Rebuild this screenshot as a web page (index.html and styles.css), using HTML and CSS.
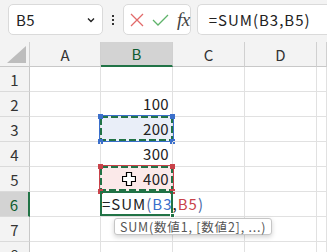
FILE: index.html
```html
<!DOCTYPE html>
<html lang="ja">
<head>
<meta charset="utf-8">
<link rel="stylesheet" href="styles.css">
</head>
<body>
<div class="toolbar">
  <div class="namebox">
    <span class="nb-text">B5</span>
    <svg class="chev" width="8" height="6" viewBox="0 0 8 6"><path d="M1 1.5 L4 4.5 L7 1.5" fill="none" stroke="#222" stroke-width="1.4"/></svg>
  </div>
  <div class="dots"><i></i><i></i><i></i></div>
  <div class="btns">
    <svg class="ic-x" width="14" height="14" viewBox="0 0 14 14"><path d="M1 1 L13 13 M13 1 L1 13" stroke="#e26a6a" stroke-width="1.3" fill="none"/></svg>
    <svg class="ic-ok" width="17" height="12" viewBox="0 0 17 12"><path d="M1 6 L6 11 L16 1" stroke="#5fb36a" stroke-width="1.3" fill="none"/></svg>
    <span class="fx">fx</span>
  </div>
  <div class="formula">=SUM(B3,B5)</div>
</div>

<div class="grid">
  <div class="h corner"><svg width="19" height="17" viewBox="0 0 19 17"><path d="M19 0 L19 17 L0 17 Z" fill="#bdbdbd"/></svg></div>
  <div class="h col">A</div>
  <div class="h col sel">B</div>
  <div class="h col">C</div>
  <div class="h col">D</div>
  <div class="h col"></div>

  <div class="h row">1</div><div class="c"></div><div class="c"></div><div class="c"></div><div class="c"></div><div class="c"></div>
  <div class="h row">2</div><div class="c"></div><div class="c num">100</div><div class="c"></div><div class="c"></div><div class="c"></div>
  <div class="h row">3</div><div class="c"></div>
  <div class="c num ref-blue">200
    <svg class="ants" width="81" height="34" viewBox="0 0 81 34">
      <rect x="2.5" y="2.5" width="74" height="26" fill="none" stroke="#3b6fcb" stroke-width="1"/>
      <rect x="4" y="4" width="71" height="23" fill="none" stroke="#217346" stroke-width="2" stroke-dasharray="7 3"/>
      <rect x="1" y="1" width="5" height="5" fill="#3b6fcb"/>
      <rect x="73" y="1" width="5" height="5" fill="#3b6fcb"/>
      <rect x="1" y="26" width="5" height="5" fill="#3b6fcb"/>
      <rect x="73" y="26" width="5" height="5" fill="#3b6fcb"/>
    </svg>
  </div>
  <div class="c"></div><div class="c"></div><div class="c"></div>
  <div class="h row">4</div><div class="c"></div><div class="c num">300</div><div class="c"></div><div class="c"></div><div class="c"></div>
  <div class="h row">5</div><div class="c"></div>
  <div class="c num ref-red">400
    <svg class="ants" width="81" height="34" viewBox="0 0 81 34">
      <rect x="2.5" y="2.5" width="74" height="26" fill="none" stroke="#c9424a" stroke-width="1"/>
      <rect x="4" y="4" width="71" height="23" fill="none" stroke="#217346" stroke-width="2" stroke-dasharray="7 3"/>
      <rect x="1" y="1" width="5" height="5" fill="#c9424a"/>
      <rect x="73" y="1" width="5" height="5" fill="#c9424a"/>
      <rect x="1" y="26" width="5" height="5" fill="#c9424a"/>
      <rect x="73" y="26" width="5" height="5" fill="#c9424a"/>
    </svg>
    <svg class="cursor" width="14" height="14" viewBox="0 0 14 14"><path d="M4.5 0.5 H9.5 V4.5 H13.5 V9.5 H9.5 V13.5 H4.5 V9.5 H0.5 V4.5 H4.5 Z" fill="#fff" stroke="#000" stroke-width="1.2"/></svg>
  </div>
  <div class="c"></div><div class="c"></div><div class="c"></div>
  <div class="h row sel">6</div><div class="c"></div>
  <div class="c edit">
    <div class="active"></div>
    <div class="fill"></div>
    <span class="ftext">=SUM<span class="par">(</span><span class="rb">B3</span>,<span class="rr">B5</span><span class="par">)</span></span>
    <div class="tip">SUM(数値1, [数値2], ...)</div>
  </div>
  <div class="c"></div><div class="c"></div><div class="c"></div>
  <div class="h row">7</div><div class="c"></div><div class="c"></div><div class="c"></div><div class="c"></div><div class="c"></div>
  <div class="h row">8</div><div class="c"></div><div class="c"></div><div class="c"></div><div class="c"></div><div class="c"></div>
</div>
</body>
</html>
```
FILE: styles.css
```css
* { box-sizing: border-box; }
html, body { margin: 0; padding: 0; }
body {
  width: 327px;
  height: 252px;
  overflow: hidden;
  background: #fff;
  font-family: "Noto Sans CJK JP", "Noto Sans", sans-serif;
  color: #222;
}

/* ---------- toolbar ---------- */
.toolbar {
  height: 42px;
  background: #f3f3f3;
  display: flex;
  align-items: flex-start;
  padding: 4px 0 0 8px;
  white-space: nowrap;
}
.namebox, .btns, .formula {
  height: 31px;
  background: #fff;
  border: 1px solid #dadada;
  border-radius: 5px;
  display: flex;
  align-items: center;
}
.namebox {
  width: 101px;
  padding: 0 7px 0 7px;
  justify-content: space-between;
}
.nb-text { font-size: 15px; letter-spacing: 0.5px; }
.dots {
  width: 22px;
  height: 31px;
  display: flex;
  flex-direction: column;
  align-items: center;
  justify-content: center;
  gap: 2px;
}
.dots i {
  display: block;
  width: 2px;
  height: 2px;
  background: #333;
}
.btns {
  width: 72px;
  padding-left: 6px;
}
.ic-x { margin-right: 8px; }
.ic-ok { margin-right: 8px; }
.fx {
  font-family: "Liberation Serif", serif;
  font-style: italic;
  font-size: 19px;
  color: #444;
  letter-spacing: -0.5px;
}
.formula {
  margin-left: 6px;
  width: 140px;
  padding-left: 11px;
  font-size: 15px;
  letter-spacing: 1px;
  border-right: none;
  border-radius: 5px 0 0 5px;
}

/* ---------- grid ---------- */
.grid {
  display: grid;
  grid-template-columns: 30px 71px 72px 72px 72px 10px;
  grid-auto-rows: 25px;
  font-size: 15px;
}
.h {
  background: #f3f3f3;
  color: #333;
  display: flex;
  align-items: center;
  justify-content: center;
}
.corner {
  border-right: 1px solid #d0d0d0;
  border-bottom: 1px solid #c8c8c8;
  align-items: flex-end;
  justify-content: flex-end;
  padding: 0 3px 3px 0;
}
.corner svg { display: block; }
.col {
  border-right: 1px solid #d0d0d0;
  border-bottom: 1px solid #c8c8c8;
}
.col.sel {
  background: #d3d3d3;
  color: #0e5c2f;
  border-bottom: 2px solid #217346;
}
.row {
  border-right: 1px solid #c8c8c8;
  border-bottom: 1px solid #dadada;
}
.row.sel {
  background: #d3d3d3;
  color: #0e5c2f;
  border-right: 2px solid #217346;
}
.c {
  border-right: 1px solid #e1e1e1;
  border-bottom: 1px solid #e1e1e1;
  position: relative;
  line-height: 24px;
  white-space: nowrap;
}
.num {
  text-align: right;
  padding-right: 3px;
  letter-spacing: 0.3px;
}
.ref-blue { background: #e9eef8; }
.ref-red { background: #fbe9e9; }
.ants {
  position: absolute;
  left: -4px;
  top: -4px;
  overflow: visible;
  pointer-events: none;
}
.cursor {
  position: absolute;
  left: 21px;
  top: 5px;
}
.edit {
  padding-left: 1px;
  overflow: visible;
  z-index: 2;
}
.ftext {
  position: relative;
  letter-spacing: 1px;
}
.par { color: #4a6aa8; }
.rb { color: #3b6fcb; }
.rr { color: #c9424a; }
.active {
  position: absolute;
  left: -1px;
  top: -1px;
  width: 73px;
  height: 25px;
  border: 2px solid #217346;
}
.fill {
  position: absolute;
  left: 69px;
  top: 21px;
  width: 5px;
  height: 5px;
  background: #217346;
  border: 1px solid #fff;
}
.tip {
  position: absolute;
  left: 13px;
  top: 26px;
  height: 17px;
  padding: 0 5px;
  background: #fff;
  border: 1px solid #c6c6c6;
  border-radius: 3px;
  box-shadow: 0 2px 5px rgba(0, 0, 0, 0.18);
  font-size: 12.5px;
  line-height: 15px;
  letter-spacing: 0.8px;
  color: #555;
  z-index: 3;
}
```
